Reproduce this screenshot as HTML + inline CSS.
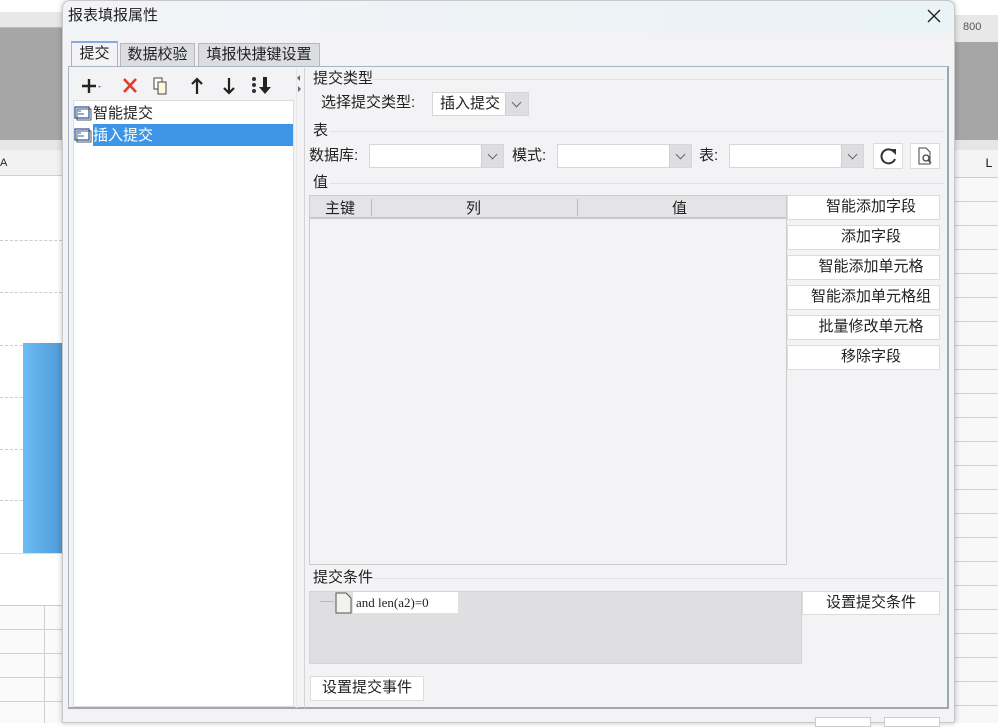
<!DOCTYPE html>
<html><head><meta charset="utf-8"><style>
*{margin:0;padding:0;box-sizing:border-box}
body{width:998px;height:723px;overflow:hidden;position:relative;background:#fff;font-family:"Liberation Sans","Noto Sans CJK SC",sans-serif;font-size:14px;color:#222}
.a{position:absolute}
.btn{position:absolute;background:#fff;border:1px solid #dcdcdc;text-align:center;font-size:14px;line-height:22px;color:#222}
.lbl{position:absolute;font-size:14px;line-height:18px}
.sep{position:absolute;height:1px;background:#e2e2e4}
.combo{position:absolute;background:#fff;border:1px solid #d6d6d6;height:24px}
.combo .dd{position:absolute;right:0;top:0;width:22px;height:22px;background:#dedee2;border-left:1px solid #d0d0d0}
.combo .dd:after{content:"";position:absolute;left:7px;top:6px;width:6px;height:6px;border-right:1px solid #666;border-bottom:1px solid #666;transform:rotate(45deg)}
.hl{position:absolute;left:0;right:0;height:1px;background:#d6d6d6}
</style></head><body>
<!-- background left -->
<div class="a" style="left:0;top:12px;width:62px;height:16px;background:#e8e8e8;border-bottom:1px solid #bbb"></div>
<div class="a" style="left:0;top:28px;width:62px;height:112px;background:#a6a6a6"></div>
<div class="a" style="left:0;top:140px;width:62px;height:10px;background:#e6e6e6"></div>
<div class="a" style="left:0;top:150px;width:62px;height:26px;background:#f2f2f2;border-bottom:1px solid #d0d0d0;font-size:11px;line-height:26px">A</div>
<div class="a" style="left:0;top:240px;width:62px;border-top:1px dashed #ccc"></div>
<div class="a" style="left:0;top:292px;width:62px;border-top:1px dashed #ccc"></div>
<div class="a" style="left:0;top:345px;width:62px;border-top:1px dashed #ccc"></div>
<div class="a" style="left:0;top:397px;width:62px;border-top:1px dashed #ccc"></div>
<div class="a" style="left:0;top:449px;width:62px;border-top:1px dashed #ccc"></div>
<div class="a" style="left:0;top:500px;width:62px;border-top:1px dashed #ccc"></div>
<div class="a" style="left:23px;top:343px;width:40px;height:210px;background:linear-gradient(90deg,#6cbcf5,#4f9ad8)"></div>
<div class="a" style="left:0;top:553px;width:62px;height:1px;background:#ddd"></div>
<div class="a" style="left:0;top:605px;width:62px;height:118px;background:repeating-linear-gradient(180deg,#fafafa 0,#fafafa 23px,#cfcfcf 23px,#cfcfcf 24px);border-top:1px solid #ccc"></div>
<div class="a" style="left:44px;top:605px;width:1px;height:118px;background:#cfcfcf"></div>
<!-- background right -->
<div class="a" style="left:955px;top:15px;width:43px;height:27px;background:#e8e8e8;font-size:11px;line-height:24px;padding-left:8px;color:#555">800</div>
<div class="a" style="left:955px;top:42px;width:43px;height:98px;background:#a6a6a6"></div>
<div class="a" style="left:955px;top:140px;width:43px;height:10px;background:#e6e6e6"></div>
<div class="a" style="left:955px;top:150px;width:43px;height:28px;background:#f4f4f4;border-bottom:1px solid #ccc;font-size:13px;line-height:28px;padding-left:30px;font-family:'Liberation Mono',monospace">L</div>
<div class="a" style="left:955px;top:178px;width:43px;height:545px;background:repeating-linear-gradient(180deg,#f8f8f8 0,#f8f8f8 23px,#d0d0d0 23px,#d0d0d0 24px)"></div>
<!-- dialog -->
<div class="a" style="left:62px;top:0;width:893px;height:723px;background:#f3f3f5;border:1px solid #c8c8c8;border-radius:8px 8px 0 0;box-shadow:0 0 6px rgba(0,0,0,.25)"></div>
<div class="a" style="left:63px;top:1px;width:891px;height:32px;background:linear-gradient(90deg,#f2f3f7,#eaf3f6);border-radius:8px 8px 0 0"></div>
<div class="lbl" style="left:68px;top:7px;font-size:15px">报表填报属性</div>
<svg class="a" style="left:927px;top:9px" width="14" height="14"><path d="M1 1L13 13M13 1L1 13" stroke="#222" stroke-width="1.4"/></svg>
<!-- tabs -->
<div class="a" style="left:71px;top:41px;width:47px;height:26px;background:#f3f3f5;border:1px solid #a9b4c4;border-bottom:none;border-top:2px solid #8aa9d8;font-size:15px;line-height:22px;text-align:center">提交</div>
<div class="a" style="left:120px;top:43px;width:75px;height:23px;background:#dcdde1;border:1px solid #b9b9bd;border-bottom:none;font-size:15px;line-height:22px;text-align:center">数据校验</div>
<div class="a" style="left:198px;top:43px;width:122px;height:23px;background:#dcdde1;border:1px solid #b9b9bd;border-bottom:none;font-size:15px;line-height:22px;text-align:center">填报快捷键设置</div>
<div class="a" style="left:68px;top:66px;width:881px;height:643px;border:1px solid #a9b4c4;border-right:2px solid #9aa;border-bottom:2px solid #a4a8ae"></div>
<!-- left toolbar -->
<svg class="a" style="left:78px;top:74px" width="200" height="24">
<path d="M4 12H18M11 5V19" stroke="#222" stroke-width="2.4"/><path d="M20 12l3 0l-1.5 2z" fill="#888"/>
<path d="M46 5L58 18M58 5L46 18" stroke="#e53b2f" stroke-width="2.6"/>
<rect x="76" y="4" width="8" height="11" fill="#fff" stroke="#444"/><rect x="80" y="8" width="8" height="12" fill="#fff8e0" stroke="#444"/>
<path d="M119 20V6M114 10l5-5 5 5" stroke="#222" stroke-width="2.2" fill="none"/>
<path d="M151 4V18M146 14l5 5 5-5" stroke="#222" stroke-width="2.2" fill="none"/>
<circle cx="176" cy="5" r="2" fill="#333"/><circle cx="176" cy="11" r="2" fill="#333"/><circle cx="176" cy="17" r="2" fill="#333"/>
<path d="M187 3V14" stroke="#222" stroke-width="4"/><path d="M181 13h12l-6 7z" fill="#222"/>
</svg>
<div class="a" style="left:73px;top:100px;width:221px;height:607px;background:#fff;border:1px solid #ddd"></div>
<svg class="a" style="left:73px;top:105px" width="20" height="40">
<rect x="2" y="2" width="14" height="11" fill="#fff" stroke="#2d5aa8" stroke-width="1.3"/><rect x="4" y="4" width="14" height="11" fill="none" stroke="#555"/><path d="M5 6h3M5 9h6" stroke="#2d5aa8"/>
<rect x="2" y="24" width="14" height="11" fill="#fff" stroke="#2d5aa8" stroke-width="1.3"/><rect x="4" y="26" width="14" height="11" fill="none" stroke="#555"/><path d="M5 28h3M5 31h6" stroke="#2d5aa8"/>
</svg>
<div class="lbl" style="left:93px;top:105px;font-size:15px">智能提交</div>
<div class="a" style="left:93px;top:124px;width:200px;height:22px;background:#3d95e8"></div>
<div class="lbl" style="left:93px;top:127px;font-size:15px;color:#fff">插入提交</div>
<div class="a" style="left:296px;top:68px;width:1px;height:640px;background:#e6e6e6"></div>
<div class="a" style="left:304px;top:68px;width:1px;height:640px;background:#d4d4d8"></div>
<svg class="a" style="left:296px;top:74px" width="6" height="20"><path d="M4 1L1 4L4 7z M2 12l3 3-3 3z" fill="#666"/></svg>
<!-- right -->
<div class="lbl" style="left:313px;top:70px;font-size:15px">提交类型</div>
<div class="sep" style="left:372px;top:79px;width:572px"></div>
<div class="lbl" style="left:321px;top:94px;font-size:15px">选择提交类型:</div>
<div class="combo" style="left:432px;top:92px;width:97px">
<span class="lbl" style="left:7px;top:2px;font-size:15px">插入提交</span><div class="dd" style="width:23px"></div></div>
<div class="lbl" style="left:313px;top:122px;font-size:15px">表</div>
<div class="sep" style="left:330px;top:131px;width:614px"></div>
<div class="lbl" style="left:309px;top:147px;font-size:15px">数据库:</div>
<div class="combo" style="left:369px;top:144px;width:135px"><div class="dd"></div></div>
<div class="lbl" style="left:512px;top:147px;font-size:15px">模式:</div>
<div class="combo" style="left:557px;top:144px;width:135px"><div class="dd"></div></div>
<div class="lbl" style="left:699px;top:147px;font-size:15px">表:</div>
<div class="combo" style="left:729px;top:144px;width:135px"><div class="dd"></div></div>
<div class="btn" style="left:873px;top:143px;width:30px;height:26px"></div>
<svg class="a" style="left:879px;top:147px" width="20" height="18"><path d="M15 5A7 7 0 1 0 16 12" fill="none" stroke="#333" stroke-width="2"/><path d="M11 2h6v6z" fill="#333"/></svg>
<div class="btn" style="left:910px;top:143px;width:30px;height:26px"></div>
<svg class="a" style="left:916px;top:146px" width="18" height="20"><path d="M3 2h7l4 4v12H3z" fill="#fff" stroke="#444"/><circle cx="10" cy="12" r="3" fill="none" stroke="#444" stroke-width="1.3"/><path d="M12 14l3 3" stroke="#444" stroke-width="1.5"/></svg>
<div class="lbl" style="left:313px;top:174px;font-size:15px">值</div>
<div class="sep" style="left:330px;top:183px;width:614px"></div>
<div class="a" style="left:309px;top:195px;width:478px;height:370px;background:#f3f3f5;border:1px solid #ccc"></div>
<div class="a" style="left:310px;top:196px;width:476px;height:23px;background:#e4e4e6;border-bottom:2px solid #c8c8cc"></div>
<div class="a" style="left:371px;top:199px;width:1px;height:17px;background:#bbb"></div>
<div class="a" style="left:577px;top:199px;width:1px;height:17px;background:#bbb"></div>
<div class="lbl" style="left:325px;top:200px;font-size:15px">主键</div>
<div class="lbl" style="left:466px;top:200px;font-size:15px">列</div>
<div class="lbl" style="left:672px;top:200px;font-size:15px">值</div>
<div class="btn" style="left:787px;top:195px;width:153px;height:25px;font-size:15px">　智能添加字段</div>
<div class="btn" style="left:787px;top:225px;width:153px;height:25px;font-size:15px">　添加字段</div>
<div class="btn" style="left:787px;top:255px;width:153px;height:25px;font-size:15px">　智能添加单元格</div>
<div class="btn" style="left:787px;top:285px;width:153px;height:25px;font-size:15px">　智能添加单元格组</div>
<div class="btn" style="left:787px;top:315px;width:153px;height:25px;font-size:15px">　批量修改单元格</div>
<div class="btn" style="left:787px;top:345px;width:153px;height:25px;font-size:15px">　移除字段</div>
<div class="lbl" style="left:313px;top:569px;font-size:15px">提交条件</div>
<div class="sep" style="left:372px;top:578px;width:572px"></div>
<div class="a" style="left:309px;top:591px;width:493px;height:73px;background:#dfdfe1;border:1px solid #d4d4d6"></div>
<div class="a" style="left:320px;top:601px;width:14px;height:1px;background:#bbb"></div>
<svg class="a" style="left:334px;top:592px" width="20" height="22"><path d="M2 1h10l5 5v15H2z" fill="#f4f2ec" stroke="#555"/></svg>
<div class="a" style="left:353px;top:592px;width:105px;height:21px;background:#fff;font-family:'Liberation Serif',serif;font-size:13px;line-height:21px;padding-left:3px">and len(a2)=0</div>
<div class="btn" style="left:802px;top:591px;width:138px;height:24px;font-size:15px">设置提交条件</div>
<div class="btn" style="left:310px;top:676px;width:114px;height:25px;font-size:15px">设置提交事件</div>
<div class="a" style="left:815px;top:717px;width:56px;height:10px;background:#fff;border:1px solid #ccc"></div>
<div class="a" style="left:884px;top:717px;width:56px;height:10px;background:#fff;border:1px solid #ccc"></div>
</body></html>
